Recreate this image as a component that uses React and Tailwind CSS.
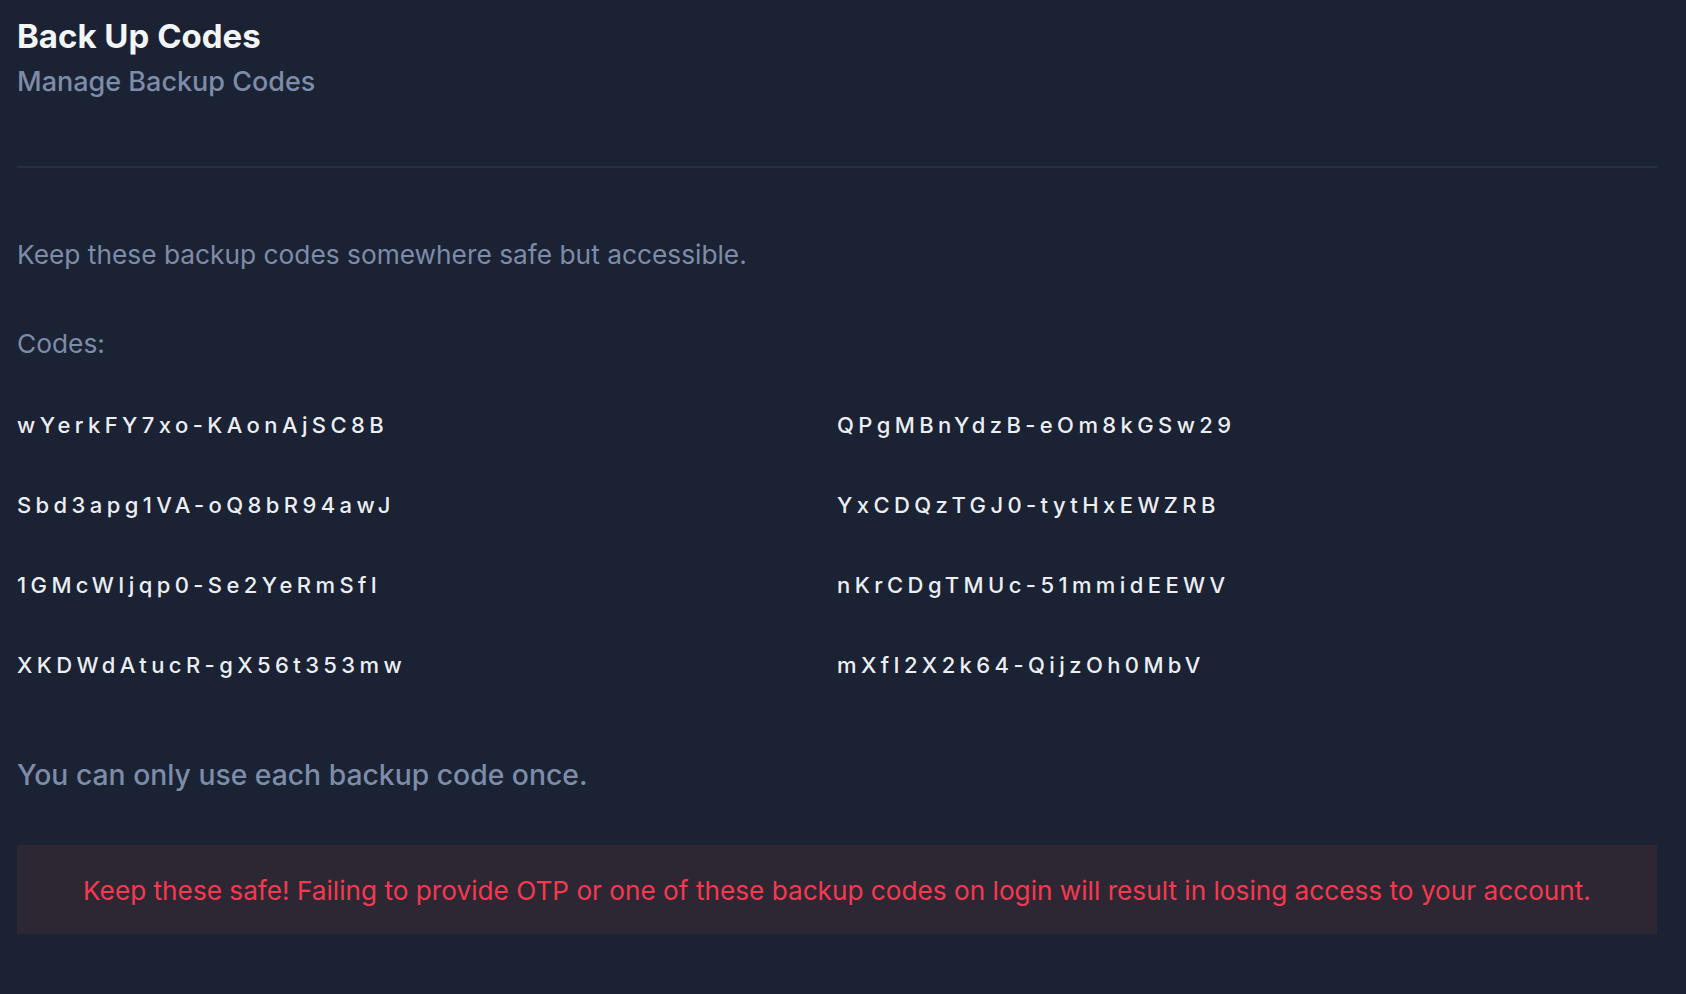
const codes = [
  ["wYerkFY7xo-KAonAjSC8B", "QPgMBnYdzB-eOm8kGSw29"],
  ["Sbd3apg1VA-oQ8bR94awJ", "YxCDQzTGJ0-tytHxEWZRB"],
  ["1GMcWIjqp0-Se2YeRmSfI", "nKrCDgTMUc-51mmidEEWV"],
  ["XKDWdAtucR-gX56t353mw", "mXfI2X2k64-QijzOh0MbV"],
];

export default function App() {
  return (
    <div className="min-h-screen bg-[#1a2233] font-['Inter',sans-serif] pl-[17px] pr-[29px] pt-4">
      {/* Header */}
      <div>
        <h1 className="text-[33px] leading-[40px] font-bold text-[#f4f5f7]">
          Back Up Codes
        </h1>
        <p className="mt-2 text-[27px] leading-[36px] font-medium text-[#7d8ca8]">
          Manage Backup Codes
        </p>
      </div>

      <div className="mt-[66px] h-[2px] bg-[#253043]" />

      <p className="mt-[71px] text-[26.3px] leading-[32px] text-[#7d8ca8]">
        Keep these backup codes somewhere safe but accessible.
      </p>

      <p className="mt-[57px] text-[26.3px] leading-[32px] text-[#7d8ca8]">
        Codes:
      </p>

      <div className="mt-[51px] grid grid-cols-2 gap-y-[52px]">
        {codes.flat().map((code) => (
          <div
            key={code}
            className="text-[22px] leading-[28px] font-medium tracking-[0.2em] text-[#eceef2]"
          >
            {code}
          </div>
        ))}
      </div>

      <p className="mt-[78px] text-[28.3px] leading-[36px] font-medium text-[#7d8ca8]">
        You can only use each backup code once.
      </p>

      <div className="mt-[52px] h-[89px] bg-[#2d2734] flex items-center justify-center">
        <p className="pt-[2px] text-[26.2px] leading-[32px] text-[#f5394e]">
          Keep these safe! Failing to provide OTP or one of these backup codes on
          login will result in losing access to your account.
        </p>
      </div>
    </div>
  );
}
